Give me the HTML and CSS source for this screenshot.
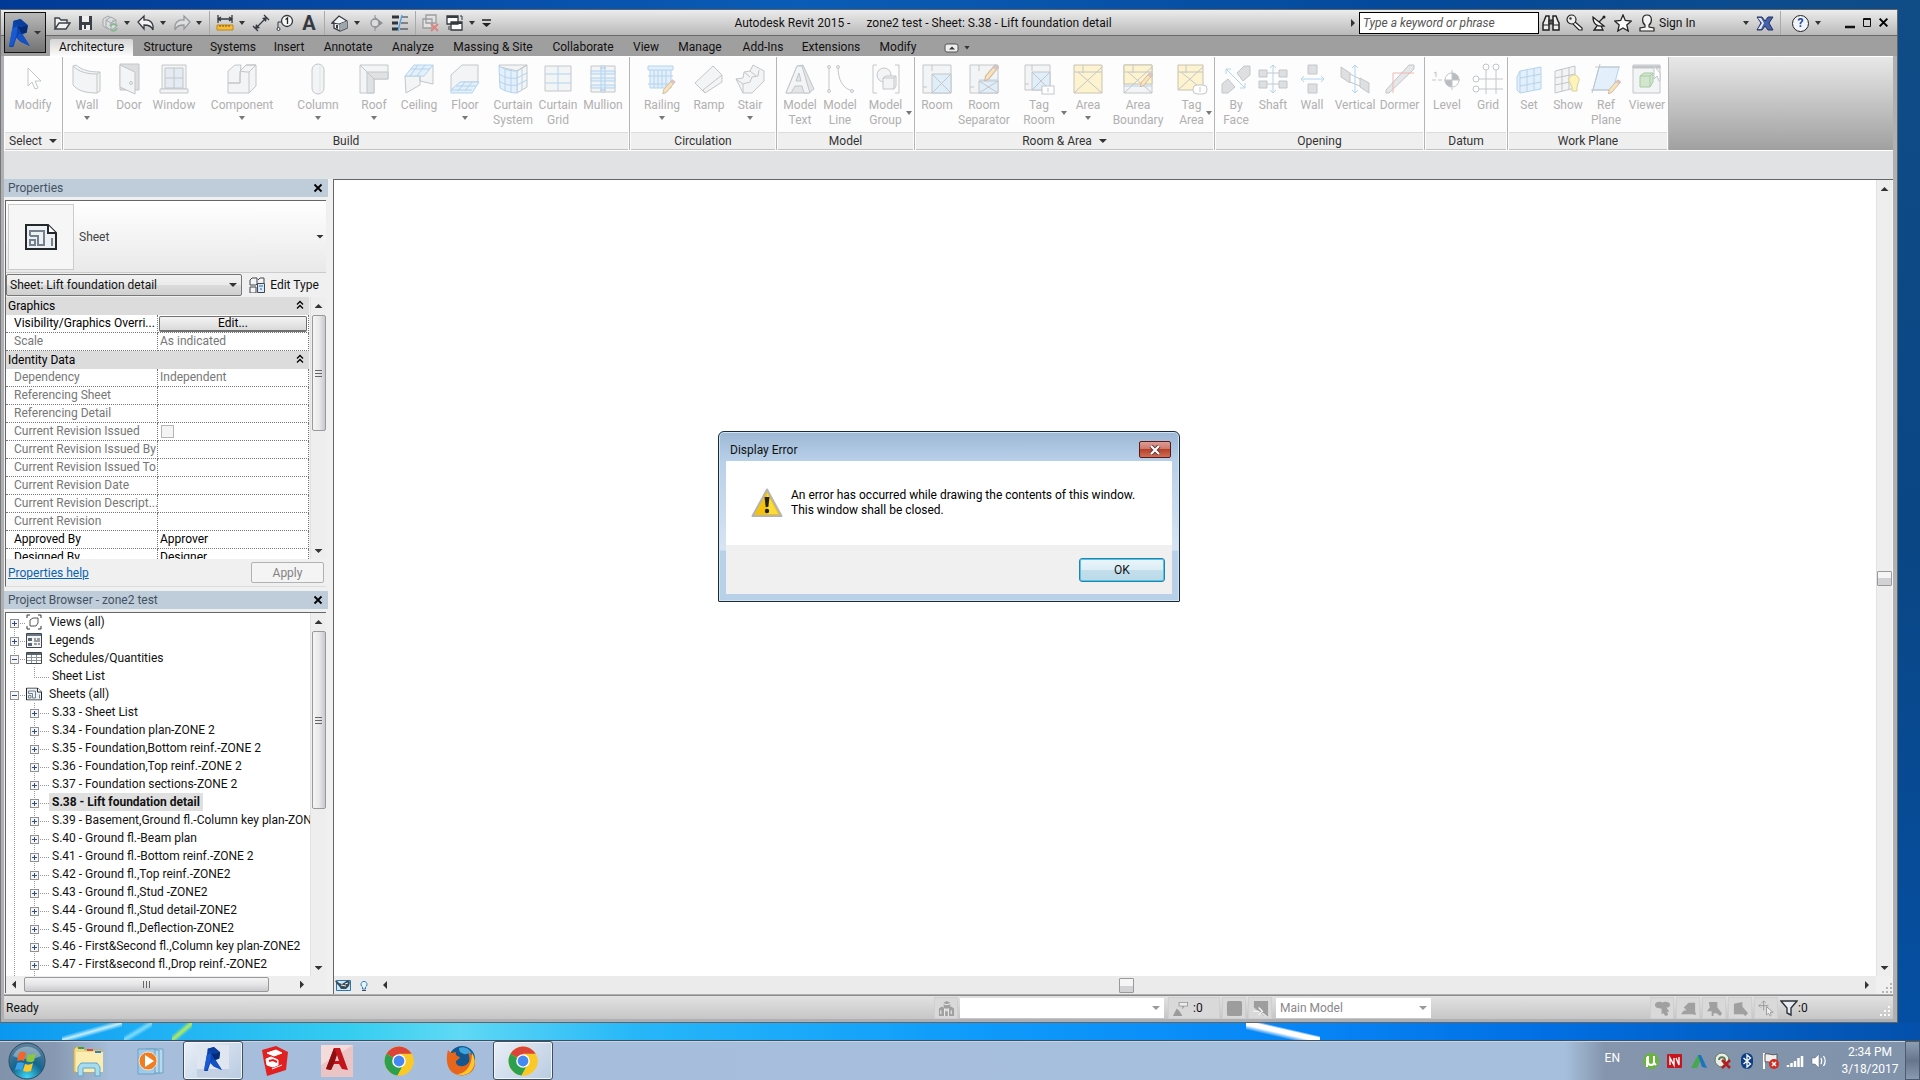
FILE: index.html
```html
<!DOCTYPE html>
<html lang="en">
<head>
    <meta charset="UTF-8">
    <meta name="viewport" content="width=device-width, initial-scale=1.0">
    <title>Autodesk Revit 2015</title>
    <link rel="stylesheet" href="styles.css">
</head>
<body>
    <!-- Shared icons -->
    <svg class="defs" aria-hidden="true">
        <symbol id="plus" viewBox="0 0 9 9"><rect x=".5" y=".5" width="8" height="8" fill="#f6f6f6" stroke="#919191"/><path d="M2 4.500h5M4.500 2v5" stroke="#2f4a86"/></symbol>
        <symbol id="minus" viewBox="0 0 9 9"><rect x=".5" y=".5" width="8" height="8" fill="#f6f6f6" stroke="#919191"/><path d="M2 4.500h5" stroke="#2f4a86"/></symbol>
        <symbol id="x" viewBox="0 0 10 10"><path d="M1.500 1.500l7 7M8.500 1.500l-7 7" stroke="#000" stroke-width="1.800"/></symbol>
        <symbol id="chev" viewBox="0 0 8 10"><path d="M1 4.500l3-3 3 3M1 8.500l3-3 3 3" fill="none" stroke="#000" stroke-width="1.300"/></symbol>
        <symbol id="sheet" viewBox="0 0 32 26"><path d="M1 1h22l8 8v16H1z" fill="#eef1f4" stroke="#23282d" stroke-width="2"/><path d="M23 1v8h8" fill="#fff" stroke="#23282d" stroke-width="2"/><path d="M5 12V7h14v14h-6v-9H5M5 16h5v5H5zM27 14v8" fill="none" stroke="#74818f" stroke-width="2"/></symbol>
        <symbol id="revit" viewBox="0 0 20 27"><path d="M4 2l7-2 7 6-1 7-4 2 7 11-9-4-4-4-3 9H0l3-17z" fill="#0b45ad"/><path d="M4 2l7-2 7 6-6 2z" fill="#0c3f9d"/><path d="M8 7l4 1 6-2-1 7-5 1z" fill="#062a74"/><path d="M3 9l5-2-1 9-4 10-3-1z" fill="#1a5ad0"/><path d="M10 14l3 1 7 11-9-4-4-4z" fill="#1550c4"/></symbol>
        <symbol id="chrome" viewBox="0 0 30 30"><circle cx="15" cy="15" r="14.500" fill="#fbc926"/><path d="M15 15L2.500 7.700A14.500 14.500 0 0 1 27.600 7.700z" fill="#dc4437"/><path d="M2.500 7.700A14.500 14.500 0 0 0 13.500 29.400L19.500 18z" fill="#2da04e"/><path d="M15 7.700h12.600A14.500 14.500 0 0 1 13.500 29.400L20 19z" fill="#fbc926"/><circle cx="15" cy="15" r="6.800" fill="#fff"/><circle cx="15" cy="15" r="5.400" fill="#4688f1"/></symbol>
        <symbol id="pencil" viewBox="0 0 14 16"><path d="M11 1l3 2-9 11-4 2 1-5z" fill="#fae3b8" stroke="#cdb9a2"/><path d="M11 1l3 2-2 2-3-2z" fill="#f2c0b8"/></symbol>
    </svg>

    <div class="app">
        <!-- Title bar and tabs -->
        <header class="frame-top">
            <button class="app-button" aria-label="Application menu"><svg width="21" height="28"><use href="#revit"/></svg><span class="caret"></span></button>
            <div class="titlebar">
                <div class="quick">
                    <button class="qb" aria-label="Open"><svg viewBox="0 0 18 18"><path d="M2 15V4h4l2 2h6v3M2 15l4-6h11l-4 6z" fill="#f2f2f2" stroke="#3c4248" stroke-width="1.400"/></svg></button>
                    <button class="qb" aria-label="Save"><svg viewBox="0 0 18 18"><path d="M2 2h13v14H2z" fill="#3b4148"/><path d="M5 2h7v6H5zM5 11h8v5H5z" fill="#f0f0f0"/><path d="M7 11h2v4H7z" fill="#3b4148"/></svg></button>
                    <button class="qb" aria-label="Synchronize"><svg viewBox="0 0 18 18" fill="#dadcdd" stroke="#a3a7aa"><path d="M2 5l5-3 5 3v7l-5 3-5-3z"/><path d="M5 6l5-3 5 3v7l-5 3-5-3zM5 6l5 3 5-3M10 9v7"/><path d="M9 12a4 4 0 0 1 7 0M16 14a4 4 0 0 1-6 2" stroke="#86b990" fill="none" stroke-width="2"/></svg></button>
                    <span class="caret gap"></span>
                    <button class="qb" aria-label="Undo"><svg viewBox="0 0 18 18"><path d="M1 8l6-6v4c6-1 10 3 9 10-1-3-4-5-9-5v4z" fill="#f4f4f4" stroke="#353a40" stroke-width="1.300"/></svg></button>
                    <span class="caret gap"></span>
                    <button class="qb" aria-label="Redo"><svg viewBox="0 0 18 18"><path d="M17 8l-6-6v4C5 5 1 9 2 16c1-3 4-5 9-5v4z" fill="#dedede" stroke="#96999c" stroke-width="1.300"/></svg></button>
                    <span class="caret gap"></span>
                    <span class="sep"></span>
                    <button class="qb" aria-label="Measure"><svg viewBox="0 0 18 18"><path d="M2 5h14M2 1v8M16 1v8M5 3L2 5l3 2M13 3l3 2-3 2" fill="none" stroke="#353a40" stroke-width="1.300"/><path d="M1 11h16v5H1z" fill="#f5bd3c" stroke="#c08613"/><path d="M4 11v2M7 11v2M10 11v2M13 11v2" stroke="#7e5607"/></svg></button>
                    <span class="caret gap"></span>
                    <button class="qb" aria-label="Aligned dimension"><svg viewBox="0 0 18 18"><path d="M4 14L14 4M1 12l5 5M12 1l5 5" stroke="#353a40" stroke-width="1.300"/><path d="M3 15l1-5 4 4zM15 3l-1 5-4-4z" fill="#353a40"/></svg></button>
                    <button class="qb" aria-label="Tag by category"><svg viewBox="0 0 18 18"><path d="M2 15V8h4" fill="none" stroke="#353a40"/><circle cx="2.500" cy="15" r="1.500" fill="#fff" stroke="#353a40"/><circle cx="11" cy="7" r="5.500" fill="#f8f8f8" stroke="#353a40" stroke-width="1.300"/><path d="M9.500 5.500l2-1.500v6" fill="none" stroke="#222" stroke-width="1.300"/></svg></button>
                    <button class="qb letter" aria-label="Text">A</button>
                    <span class="sep"></span>
                    <button class="qb" aria-label="Default 3D view"><svg viewBox="0 0 18 18"><path d="M1 9l7-7 8 5v7l-7 3-6-3V9z" fill="#f3f4f5" stroke="#353a40" stroke-width="1.300"/><path d="M1 9l7 1 8-3M9 10v7" fill="none" stroke="#353a40"/><path d="M9 10l7-3v7l-7 3z" fill="#9da5ad"/><path d="M5 11h2v4l-2-1z" fill="#353a40"/></svg></button>
                    <span class="caret gap"></span>
                    <button class="qb" aria-label="Section"><svg viewBox="0 0 18 18"><path d="M8 3l8 6-8 6z" fill="#8d9195"/><circle cx="8" cy="9" r="4" fill="#dcdcdc" stroke="#8d9195" stroke-width="1.400"/><path d="M8 1v4M8 13v4" stroke="#8d9195"/></svg></button>
                    <button class="qb" aria-label="Thin lines"><svg viewBox="0 0 18 18"><path d="M1 3h7M1 9h6M1 15h7" stroke="#2f3439" stroke-width="3"/><path d="M11 3h6M10 9h7M9 15h8" stroke="#2f3439"/><path d="M11 1L7 17" stroke="#4aa0e6" stroke-width="1.300"/></svg></button>
                    <span class="sep"></span>
                    <button class="qb" aria-label="Close hidden windows"><svg viewBox="0 0 18 18"><path d="M4 1h10v8H4zM1 5h9v9H1z" fill="#e2e2e2" stroke="#9a9da0" stroke-width="1.300"/><path d="M9 10l7 7M16 10l-7 7" stroke="#dc8580" stroke-width="2"/></svg></button>
                    <button class="qb" aria-label="Switch windows"><svg viewBox="0 0 18 18"><path d="M1 2h11v8H1zM5 8h11v8H5z" fill="#fff" stroke="#353a40" stroke-width="1.300"/><path d="M1 3h11M5 9h11" stroke="#353a40" stroke-width="2"/><path d="M14 2h2v4M3 12v4" stroke="#353a40" fill="none"/></svg></button>
                    <span class="caret gap"></span>
                    <button class="qb small" aria-label="Customize"><svg viewBox="0 0 12 12"><path d="M2 3h9" stroke="#222" stroke-width="1.500"/><path d="M2 6h9l-4.500 4z" fill="#222"/></svg></button>
                </div>
                <div class="doc-title"><span>Autodesk Revit 2015 -</span><span>zone2 test - Sheet: S.38 - Lift foundation detail</span></div>
                <div class="infocenter">
                    <span class="caret right"></span>
                    <input class="search" type="text" placeholder="Type a keyword or phrase" aria-label="Search">
                    <button class="qb" aria-label="Find"><svg viewBox="0 0 18 18"><path d="M2 7l2-5h3v14H1V9zM16 7l-2-5h-3v14h6V9z" fill="#eee" stroke="#222" stroke-width="1.500"/><path d="M7 6h4v4H7zM1 11h6M11 11h6" fill="#555" stroke="#222"/></svg></button>
                    <button class="qb" aria-label="Subscription"><svg viewBox="0 0 18 18"><path d="M8 7l8 7v2h-3l-7-7z" fill="#fff" stroke="#222" stroke-width="1.200"/><circle cx="5.500" cy="5.500" r="4.500" fill="#eee" stroke="#222" stroke-width="1.200"/><circle cx="4.500" cy="4.500" r="1.200" fill="#333"/></svg></button>
                    <button class="qb" aria-label="Exchange"><svg viewBox="0 0 18 18"><path d="M3 3c0 7 4 10 11 9zM9 8l5-5M7 12l-3 4h9l-2-4" fill="#f5f5f5" stroke="#222" stroke-width="1.300"/><circle cx="14" cy="3" r="1.500" fill="#222"/></svg></button>
                    <button class="qb" aria-label="Favorites"><svg viewBox="0 0 18 18"><path d="M9 1l2.300 5.500 6 .5-4.500 4 1.400 6L9 14l-5.200 3 1.400-6L.700 7l6-.5z" fill="#fafafa" stroke="#222" stroke-width="1.300"/></svg></button>
                    <button class="qb" aria-label="Account"><svg viewBox="0 0 18 18"><path d="M9 1c6 0 5 8 2 10v2l5 1v3H2v-3l5-1v-2C4 9 3 1 9 1z" fill="#f4f4f4" stroke="#222" stroke-width="1.200"/></svg></button>
                    <button class="sign-in">Sign In</button>
                    <span class="caret gap"></span>
                    <button class="qb" aria-label="Exchange apps"><svg viewBox="0 0 18 18"><path d="M1 3h5l3 4 3-4h5l-4 6 4 7h-5l-3-4-3 4H1l4-7z" fill="#4462ac" stroke="#26335f"/><path d="M2 4h3l3 5-3 6H2l4-6z" fill="#e4e9f5"/></svg></button>
                    <span class="sep"></span>
                    <button class="help" aria-label="Help">?</button>
                    <span class="caret"></span>
                    <div class="win-buttons">
                        <button aria-label="Minimize"><svg width="12" height="12"><path d="M1 10h10" stroke="#111" stroke-width="2.500"/></svg></button>
                        <button aria-label="Maximize"><svg width="12" height="12"><path d="M2.500 1.500h7v8h-7zM2 2.500h8" fill="none" stroke="#111"/></svg></button>
                        <button aria-label="Close"><svg width="12" height="12"><use href="#x" width="11" height="11"/></svg></button>
                    </div>
                </div>
            </div>
            <nav class="tabs">
                <a class="tab active" href="#">Architecture</a>
                <a class="tab" href="#">Structure</a>
                <a class="tab" href="#">Systems</a>
                <a class="tab" href="#">Insert</a>
                <a class="tab" href="#">Annotate</a>
                <a class="tab" href="#">Analyze</a>
                <a class="tab" href="#">Massing &amp; Site</a>
                <a class="tab" href="#">Collaborate</a>
                <a class="tab" href="#">View</a>
                <a class="tab" href="#">Manage</a>
                <a class="tab" href="#">Add-Ins</a>
                <a class="tab" href="#">Extensions</a>
                <a class="tab" href="#">Modify</a>
                <button class="collapse" aria-label="Minimize ribbon"><svg width="16" height="10"><rect x="1" y="1" width="13" height="8" rx="2" fill="#eee" stroke="#555"/><path d="M5 6.500h6L8 3.500z" fill="#333"/></svg><span class="caret"></span></button>
            </nav>
        </header>

        <!-- Ribbon -->
        <div class="ribbon">
            <section class="panel">
                <div class="tools select">
                    <button class="tool"><svg viewBox="0 0 32 32"><path d="M11 5v18l4-4 3 7 3-1-3-7h6z" fill="#fff"/></svg><span>Modify</span></button>
                </div>
                <h2>Select<span class="caret big"></span></h2>
            </section>
            <section class="panel">
                <div class="tools build">
                    <button class="tool"><svg viewBox="0 0 32 32"><path d="M2 3l3-1c6 5 13 7 24 7v19l-3 2c-11 0-19-2-24-8z"/><path d="M2 3c6 6 14 8 24 8v19M26 11l3-2" class="none"/></svg><span>Wall</span><i class="caret"></i></button>
                    <button class="tool"><svg viewBox="0 0 32 32"><path d="M7 1h19v26H7z" fill="#dcdee0"/><path d="M7 2l15 7v22L7 24z"/><circle cx="18" cy="20" r="1.500"/></svg><span>Door</span></button>
                    <button class="tool"><svg viewBox="0 0 32 32"><path d="M4 2h24v24H4z"/><path d="M7 5h18v20H7zM16 5v20M7 15h18" fill="#e4ebf3"/><path d="M2 26h28v4H2z"/></svg><span>Window</span></button>
                    <button class="tool"><svg viewBox="0 0 32 32"><path d="M2 8l7-6h6l-1 12v6H2zM14 20V8l6-6h10v21l-7 7H2V20z"/><path d="M20 2h10l-7 7v21M14 8l6 1h3" class="none"/></svg><span>Component</span><i class="caret"></i></button>
                    <button class="tool"><svg viewBox="0 0 32 32"><rect x="10" y="1" width="12" height="30" rx="6"/><path d="M18 3v26" stroke="#e1e3e5"/></svg><span>Column</span><i class="caret"></i></button>
                    <button class="tool"><svg viewBox="0 0 32 32"><path d="M2 2h28v14H16v14H2z"/><path d="M9 9h21v7H16v14H9z" fill="#dfe1e3"/><path d="M2 2l14 14"/></svg><span>Roof</span><i class="caret"></i></button>
                    <button class="tool"><svg viewBox="0 0 32 32"><path d="M2 13h15v9L3 30zM17 13l13-11v19l-13-3z"/><path d="M11 2h19l-9 11H2z" class="blue"/><path d="M8 6h19M15 2L7 13M22 2l-8 11" class="blue"/></svg><span>Ceiling</span></button>
                    <button class="tool"><svg viewBox="0 0 32 32"><path d="M2 12L13 2h16v17H14L2 28z"/><path d="M11 19h19l-7 11H2v-3z" class="blue"/><path d="M7 23h20M16 19l-7 9M23 19l-7 9M2 27h21" class="blue"/></svg><span>Floor</span><i class="caret"></i></button>
                    <button class="tool"><svg viewBox="0 0 32 32"><path d="M2 2h28L20 8 3 4zM20 8L30 2v22l-10 6z"/><path d="M2 3c6 4 12 5 18 5v22C14 30 7 28 3 25z" class="blue"/><path d="M8 6v22M14 7v22M2 11c6 4 12 5 18 4l10-5M2 18c6 4 12 5 18 4l10-5M25 5v22" class="blue none"/></svg><span>Curtain<br>System</span></button>
                    <button class="tool"><svg viewBox="0 0 32 32"><path d="M3 3h26v25H3z"/><path d="M16 3v25M3 11h26M3 20h26" class="blue"/></svg><span>Curtain<br>Grid</span></button>
                    <button class="tool"><svg viewBox="0 0 32 32"><path d="M4 3h24v26H4z"/><path d="M4 8h24v3H4zM4 15h24v3H4zM4 22h24v3H4zM14 3h4v26h-4z" class="blue"/><path d="M13 5h6M13 27h6"/></svg><span>Mullion</span></button>
                </div>
                <h2>Build</h2>
            </section>
            <section class="panel">
                <div class="tools circulation">
                    <button class="tool"><svg viewBox="0 0 32 32"><path d="M2 3h25v4H2zM4 7v18h21V7M8 7v18M12 7v18M16 7v18M20 7v18M2 13h25M2 21h25" class="blue"/><use href="#pencil" x="15" y="16" width="15" height="15"/></svg><span>Railing</span><i class="caret"></i></button>
                    <button class="tool"><svg viewBox="0 0 32 32"><path d="M2 20L20 3l9 9v7L12 30z"/><path d="M12 30l-2-3 19-15" class="none"/></svg><span>Ramp</span></button>
                    <button class="tool"><svg viewBox="0 0 32 32"><path d="M2 16l7-1 1-6 6-1 3-6 11 6v10L18 30H9z"/><path d="M2 16l7 5v9M9 21l7-2 2-5 6-1 1-6M10 9l6 5M16 8l6 5" class="none"/></svg><span>Stair</span><i class="caret"></i></button>
                </div>
                <h2>Circulation</h2>
            </section>
            <section class="panel">
                <div class="tools model">
                    <button class="tool"><svg viewBox="0 0 32 32"><path d="M13 3l6-1 11 24-5 4H2L13 3z" fill="#e3e5e7"/><path d="M13 3h5l8 27h-6l-2-7h-7l-4 7H2zM12 18h5l-2-8z"/></svg><span>Model<br>Text</span></button>
                    <button class="tool"><svg viewBox="0 0 32 32"><path d="M5 4v24M14 4c0 13 5 22 15 24" class="none"/><circle cx="5" cy="4" r="1.500"/><circle cx="5" cy="28" r="1.500"/><circle cx="14" cy="4" r="1.500"/><circle cx="28" cy="28" r="1.500"/></svg><span>Model<br>Line</span></button>
                    <button class="tool"><svg viewBox="0 0 32 32"><path d="M7 2H3v28h4M25 2h4v28h-4" class="none"/><circle cx="14" cy="12" r="7"/><path d="M13 15l3-2h10v10l-2 3H13zM13 15h11v11M24 15l2-2"/></svg><span>Model<br>Group</span><i class="caret side"></i></button>
                </div>
                <h2>Model</h2>
            </section>
            <section class="panel">
                <div class="tools room">
                    <button class="tool"><svg viewBox="0 0 32 32"><path d="M2 2h28v28H2z"/><path d="M11 11h19v19H11z" fill="#e0eef9"/><path d="M11 11l19 19M30 11L11 30M11 2v6M2 24h4"/></svg><span>Room</span></button>
                    <button class="tool"><svg viewBox="0 0 32 32"><path d="M2 2h28v28H2z"/><path d="M11 18h19v12H11z" fill="#e0eef9"/><path d="M11 18l19 12M30 18L11 30M11 2v6M2 24h4"/><path d="M11 17h19" class="blue"/><use href="#pencil" x="15" y="1" width="16" height="17"/></svg><span>Room<br>Separator</span></button>
                    <button class="tool"><svg viewBox="0 0 32 32"><path d="M2 2h25v25H2z"/><path d="M9 9h18v18H9z" fill="#e0eef9"/><path d="M9 9l18 18M27 9L9 27M9 2v6M2 21h4"/><rect x="19" y="23" width="12" height="8" fill="#fff"/><path d="M25 25v4"/></svg><span>Tag<br>Room</span><i class="caret side"></i></button>
                    <button class="tool"><svg viewBox="0 0 32 32"><path d="M2 2h28v28H2z" class="yellow"/><path d="M2 9h28M11 2v8M2 30L30 4M6 9l24 21" class="none"/></svg><span>Area</span><i class="caret"></i></button>
                    <button class="tool"><svg viewBox="0 0 32 32"><path d="M2 2h28v28H2z"/><path d="M2 2h28v19H2z" class="yellow"/><path d="M2 9h28M11 2v8M2 30L30 4M6 9l24 21" class="none"/><path d="M2 23h28" class="blue"/><use href="#pencil" x="17" y="9" width="14" height="15"/></svg><span>Area<br>Boundary</span></button>
                    <button class="tool"><svg viewBox="0 0 32 32"><path d="M2 2h25v25H2z" class="yellow"/><path d="M2 9h25M10 2v8M2 27L27 4M5 9l22 18" class="none"/><rect x="17" y="22" width="14" height="9" rx="4" fill="#fff"/><path d="M24 24v5"/></svg><span>Tag<br>Area</span><i class="caret side"></i></button>
                </div>
                <h2>Room &amp; Area<span class="caret big"></span></h2>
            </section>
            <section class="panel">
                <div class="tools opening">
                    <button class="tool"><svg viewBox="0 0 32 32"><path d="M17 10l7-7h6v9l-7 6zM2 21l6-5 7 8-7 6H2z" fill="#dedfe1"/><path d="M6 6l19 19M6 11V6h5M20 25h5v-5" class="blue none"/></svg><span>By<br>Face</span></button>
                    <button class="tool"><svg viewBox="0 0 32 32"><path d="M2 7h8v7H2zM22 7h8v7h-8zM2 18h8v7H2zM22 18h8v7h-8zM10 10h12M10 21h12" fill="#dedfe1"/><path d="M16 2v28M13 5l3-3 3 3M13 27l3 3 3-3" class="blue none"/></svg><span>Shaft</span></button>
                    <button class="tool"><svg viewBox="0 0 32 32"><path d="M12 2h9v9h-9zM12 21h9v9h-9z" fill="#dedfe1"/><path d="M5 16h23M8 13l-3 3 3 3M25 13l3 3-3 3" class="blue none"/></svg><span>Wall</span></button>
                    <button class="tool"><svg viewBox="0 0 32 32"><path d="M2 4l9 6v10l-9-6zM21 15l9 5v10l-9-6zM11 11l10 5M11 19l10 4" fill="#dedfe1"/><path d="M16 2v28M13 5l3-3 3 3M13 27l3 3 3-3" class="blue none"/></svg><span>Vertical</span></button>
                    <button class="tool"><svg viewBox="0 0 32 32"><path d="M2 27L25 2h5v4L5 30H2z" fill="#e6e7e8"/><path d="M9 30V10h21" class="red"/></svg><span>Dormer</span></button>
                </div>
                <h2>Opening</h2>
            </section>
            <section class="panel">
                <div class="tools datum">
                    <button class="tool"><svg viewBox="0 0 32 32"><path d="M1 17h29M21 7v20" stroke-dasharray="4 2"/><circle cx="21" cy="17" r="7" fill="#fff"/><path d="M21 17v-7a7 7 0 0 1 7 7zM21 17v7a7 7 0 0 1-7-7z" fill="#b9bcbf"/><path d="M5 14V9l-2 1"/></svg><span>Level</span></button>
                    <button class="tool"><svg viewBox="0 0 32 32"><path d="M14 7v24M24 7v24M7 16h24M7 26h24"/><circle cx="14" cy="4" r="3" fill="#fff"/><circle cx="24" cy="4" r="3" fill="#fff"/><circle cx="4" cy="16" r="3" fill="#fff"/><circle cx="4" cy="26" r="3" fill="#fff"/></svg><span>Grid</span></button>
                </div>
                <h2>Datum</h2>
            </section>
            <section class="panel">
                <div class="tools plane">
                    <button class="tool"><svg viewBox="0 0 32 32"><path d="M7 8l21-4v22L7 30zM7 8l-3 6v13l3 3M14 7v22M21 5v22M7 15l21-4M7 23l21-4" class="blue"/></svg><span>Set</span></button>
                    <button class="tool"><svg viewBox="0 0 32 32"><path d="M3 8l20-5v22L3 30zM10 6v22M17 5v22M3 15l20-4M3 22l20-4"/><path d="M18 20a5 5 0 1 1 8 0l-1 4v4h-5v-4z" fill="#fff3b8" stroke="#d8cfa0"/></svg><span>Show</span></button>
                    <button class="tool"><svg viewBox="0 0 32 32"><path d="M9 4h20l-6 23H3z" class="blue"/><path d="M5 4h25M1 27h20M10 1L2 30"/><use href="#pencil" x="17" y="16" width="14" height="15"/></svg><span>Ref<br>Plane</span></button>
                    <button class="tool"><svg viewBox="0 0 32 32"><path d="M2 2h27v28H2z"/><path d="M2 3h27v2H2z" fill="#c2c4c7"/><path d="M9 13l4-3h9v9l-3 5H9zM9 13h10v11M19 13l3-3" fill="#d2e6ce" stroke="#a9c9a5"/><path d="M23 3v13l3-3 2 5h1v-8z" fill="#fff"/></svg><span>Viewer</span></button>
                </div>
                <h2>Work Plane</h2>
            </section>
        </div>
        <div class="options-bar"></div>

        <main class="workspace">
            <aside class="palettes">
                <!-- Properties -->
                <div class="palette-head"><span>Properties</span><button aria-label="Close properties"><svg width="10" height="10"><use href="#x"/></svg></button></div>
                <div class="properties">
                    <div class="type-selector">
                        <div class="thumb"><svg width="32" height="26"><use href="#sheet"/></svg></div>
                        <span>Sheet</span>
                        <button aria-label="Choose type"><span class="caret big"></span></button>
                    </div>
                    <div class="type-row">
                        <label class="combo"><select aria-label="Instance"><option>Sheet: Lift foundation detail</option></select><span class="caret big"></span></label>
                        <button class="edit-type"><svg width="16" height="16"><path d="M1 3l2-2h5v6l-1 1H1zM9 3l2-2h4v5M1 10h6v6H1z" fill="#f5f5f5" stroke="#41474d"/><path d="M8.500 6.500h7v9h-7z" fill="#dce9f6" stroke="#41474d"/><path d="M10 9h4M11 12h2" stroke="#2568ad"/></svg>Edit Type</button>
                    </div>
                    <div class="scroll-pane props-pane">
                        <table class="props">
                            <colgroup><col class="name-col"><col></colgroup>
                            <tbody>
                                <tr class="group"><th colspan="2"><span>Graphics</span><svg width="8" height="10"><use href="#chev"/></svg></th></tr>
                                <tr class="on"><th>Visibility/Graphics Overri...</th><td class="flush"><button class="edit">Edit...</button></td></tr>
                                <tr><th>Scale</th><td>As indicated</td></tr>
                                <tr class="group"><th colspan="2"><span>Identity Data</span><svg width="8" height="10"><use href="#chev"/></svg></th></tr>
                                <tr><th>Dependency</th><td>Independent</td></tr>
                                <tr><th>Referencing Sheet</th><td></td></tr>
                                <tr><th>Referencing Detail</th><td></td></tr>
                                <tr><th><label for="issued">Current Revision Issued</label></th><td><input type="checkbox" id="issued" disabled></td></tr>
                                <tr><th>Current Revision Issued By</th><td></td></tr>
                                <tr><th>Current Revision Issued To</th><td></td></tr>
                                <tr><th>Current Revision Date</th><td></td></tr>
                                <tr><th>Current Revision Descript...</th><td></td></tr>
                                <tr><th>Current Revision</th><td></td></tr>
                                <tr class="on"><th>Approved By</th><td>Approver</td></tr>
                                <tr class="on"><th>Designed By</th><td>Designer</td></tr>
                            </tbody>
                        </table>
                        <div class="vbar"><span class="caret up"></span><div class="vthumb props-thumb"></div><span class="caret dark"></span></div>
                    </div>
                    <div class="props-foot"><a href="#">Properties help</a><button disabled>Apply</button></div>
                </div>

                <!-- Project browser -->
                <div class="palette-head"><span>Project Browser - zone2 test</span><button aria-label="Close browser"><svg width="10" height="10"><use href="#x"/></svg></button></div>
                <div class="browser">
                    <div class="scroll-pane tree-pane">
                        <ul class="tree">
                            <li class="root first"><svg class="box"><use href="#plus"/></svg><svg class="kind" viewBox="0 0 16 16"><path d="M1 4V1h3M12 1h3v3M15 12v3h-3M4 15H1v-3" fill="none" stroke="#333"/><path d="M4 6l3-2h5v5l-2 3H4z" fill="#fff" stroke="#555"/></svg><span>Views (all)</span></li>
                            <li class="root"><svg class="box"><use href="#plus"/></svg><svg class="kind" viewBox="0 0 16 16"><path d="M.500 1.500h15v14H.500z" fill="#f4f4f4" stroke="#41474d"/><path d="M1 3h14" stroke="#6a7785" stroke-width="2"/><path d="M2 6h4v3H2zM2 11h4v3H2z" fill="#5c6670"/><path d="M8 7h2M11 7h3M8 9h6M8 12h3M12 12h2" stroke="#41474d"/></svg><span>Legends</span></li>
                            <li class="root"><svg class="box"><use href="#minus"/></svg><svg class="kind" viewBox="0 0 16 16"><path d="M.500 2.500h15v11H.500z" fill="#fff" stroke="#41474d"/><path d="M1 4h14" stroke="#5c6670" stroke-width="2"/><path d="M1 7.500h14M1 10.500h14M5.500 5v8M10.500 5v8" stroke="#8c949c"/></svg><span>Schedules/Quantities</span></li>
                            <li class="leaf last"><span>Sheet List</span></li>
                            <li class="root"><svg class="box"><use href="#minus"/></svg><svg class="kind" viewBox="0 0 32 26"><use href="#sheet"/></svg><span>Sheets (all)</span></li>
                            <li class="leaf"><svg class="box"><use href="#plus"/></svg><span>S.33 - Sheet List</span></li>
                            <li class="leaf"><svg class="box"><use href="#plus"/></svg><span>S.34 - Foundation plan-ZONE 2</span></li>
                            <li class="leaf"><svg class="box"><use href="#plus"/></svg><span>S.35 - Foundation,Bottom reinf.-ZONE 2</span></li>
                            <li class="leaf"><svg class="box"><use href="#plus"/></svg><span>S.36 - Foundation,Top reinf.-ZONE 2</span></li>
                            <li class="leaf"><svg class="box"><use href="#plus"/></svg><span>S.37 - Foundation sections-ZONE 2</span></li>
                            <li class="leaf current"><svg class="box"><use href="#plus"/></svg><span>S.38 - Lift foundation detail</span></li>
                            <li class="leaf"><svg class="box"><use href="#plus"/></svg><span>S.39 - Basement,Ground fl.-Column key plan-ZONE2</span></li>
                            <li class="leaf"><svg class="box"><use href="#plus"/></svg><span>S.40 - Ground fl.-Beam plan</span></li>
                            <li class="leaf"><svg class="box"><use href="#plus"/></svg><span>S.41 - Ground fl.-Bottom reinf.-ZONE 2</span></li>
                            <li class="leaf"><svg class="box"><use href="#plus"/></svg><span>S.42 - Ground fl.,Top reinf.-ZONE2</span></li>
                            <li class="leaf"><svg class="box"><use href="#plus"/></svg><span>S.43 - Ground fl.,Stud -ZONE2</span></li>
                            <li class="leaf"><svg class="box"><use href="#plus"/></svg><span>S.44 - Ground fl.,Stud detail-ZONE2</span></li>
                            <li class="leaf"><svg class="box"><use href="#plus"/></svg><span>S.45 - Ground fl.,Deflection-ZONE2</span></li>
                            <li class="leaf"><svg class="box"><use href="#plus"/></svg><span>S.46 - First&amp;Second fl.,Column key plan-ZONE2</span></li>
                            <li class="leaf"><svg class="box"><use href="#plus"/></svg><span>S.47 - First&amp;second fl.,Drop reinf.-ZONE2</span></li>
                            <li class="leaf"><svg class="box"><use href="#plus"/></svg><span>S.48 - First&amp;second fl.,Beam fl.,Zone 2</span></li>
                        </ul>
                        <div class="vbar"><span class="caret up"></span><div class="vthumb tree-thumb"></div><span class="caret dark"></span></div>
                    </div>
                    <div class="hbar"><span class="caret left"></span><div class="hthumb"></div><span class="caret right"></span></div>
                </div>
            </aside>

            <!-- Drawing area -->
            <section class="view">
                <div class="canvas"></div>
                <div class="vbar view-vbar"><span class="caret up"></span><div class="knob"></div><span class="caret dark"></span></div>
                <div class="view-controls">
                    <button aria-label="Hide crop"><svg width="16" height="14"><path d="M1.500 2.500h14v10h-14z" fill="#cfe8f5" stroke="#2d74ae"/><path d="M0 3c2-1 3 1 4 2l3 1 3-2 3-2 2 2-1 4-3 3H6L4 8 2 6z" fill="#3b4c59"/><path d="M6 7l5 1M10 6l3-1" stroke="#e8f2f8"/></svg></button>
                    <button aria-label="Reveal hidden"><svg width="12" height="14"><path d="M4.500 9a3 3 0 1 1 3 0v2h-3z" fill="#e6f4fc" stroke="#2d7cc2"/><path d="M4 12.500h4" stroke="#445"/></svg></button>
                    <span class="caret left"></span>
                    <div class="track"><div class="knob"></div></div>
                    <span class="caret right"></span>
                </div>
                <div class="corner"><svg width="12" height="12" class="grip"><path d="M9 2h2M5 6h2M9 6h2M1 10h2M5 10h2M9 10h2" stroke="#b5b5b5" stroke-width="2"/></svg></div>
            </section>
        </main>

        <!-- Status bar -->
        <footer class="status">
            <span class="ready">Ready</span>
            <button class="sb" aria-label="Worksets"><svg viewBox="0 0 18 18"><path d="M1 9l3-2 3 2v8H1zM11 9l3-2 3 2v8h-6zM6 3l3-2 4 2v6H6zM7 12h4v5H7z" fill="#a0a0a0"/><path d="M7 9v8M11 9v8M6 4l3 1 4-1M3 11v4M14 11v4" fill="none" stroke="#f6f6f6"/></svg></button>
            <label class="status-combo workset"><select aria-label="Active workset" disabled><option></option></select><span class="caret big"></span></label>
            <button class="sb count"><svg viewBox="0 0 18 18"><path d="M7 2h10v5h-4l-2 3V7H7zM5 9l3 3 3 5H1z" fill="#9b9b9b"/><path d="M8 3h8v3H8z" fill="#ececec"/></svg>:0</button>
            <button class="sb" aria-label="Design options"><svg viewBox="0 0 18 18"><rect x="1" y="1" width="16" height="16" rx="2" fill="#9d9d9d"/></svg></button>
            <button class="sb" aria-label="Pick to edit"><svg viewBox="0 0 18 18"><path d="M2 1h15v16h-4L2 8z" fill="#9d9d9d"/><path d="M1 12h7M7 8l4 4-4 4M11 14l4 3" stroke="#f3f3f3" fill="none" stroke-width="1.500"/></svg></button>
            <label class="status-combo option"><select aria-label="Design option" disabled><option>Main Model</option></select><span class="caret big"></span></label>
            <div class="select-tools">
                <button class="sb" aria-label="Select links"><svg viewBox="0 0 18 18"><path d="M1 5c0-3 6-4 8-2 2-2 8-1 8 2 0 2-2 3-4 3l3 4-2 1 1 3-3 1-2-3-2 1V9C4 9 1 8 1 5z" fill="#a0a0a0"/></svg></button>
                <button class="sb" aria-label="Select underlay"><svg viewBox="0 0 18 18"><path d="M9 3h7v9l1 4-4-1H1l3-4h3L4 8z" fill="#a0a0a0"/></svg></button>
                <button class="sb" aria-label="Select pinned"><svg viewBox="0 0 18 18"><path d="M3 2h9v6l5 6-2 3-4-3H8v3H6v-5H1l3-4z" fill="#a0a0a0"/></svg></button>
                <button class="sb" aria-label="Select by face"><svg viewBox="0 0 18 18"><path d="M2 4l9-2v5l6 7-3 3-2-2H2z" fill="#a0a0a0"/></svg></button>
                <button class="sb" aria-label="Drag elements"><svg viewBox="0 0 18 18"><path d="M6 1v10M1 6h10M4 3l2-2 2 2M3 4L1 6l2 2M9 7v9l2-2 2 3 1-1-1-3h3z" fill="#eee" stroke="#999"/></svg></button>
            </div>
            <button class="filter"><svg width="18" height="18"><path d="M1 2h16l-6 7v7l-4-2V9z" fill="#e8ecf2" stroke="#2d333a" stroke-width="1.400"/></svg>:0</button>
            <svg width="12" height="12" class="grip"><path d="M9 2h2M5 6h2M9 6h2M1 10h2M5 10h2M9 10h2" stroke="#fafafa" stroke-width="2"/></svg>
        </footer>
    </div>

    <!-- Error dialog -->
    <div class="dialog" role="alertdialog" aria-labelledby="dlg-title">
        <div class="dialog-head"><span id="dlg-title">Display Error</span><button aria-label="Close dialog"><svg width="14" height="10"><path d="M3 1l8 8M11 1L3 9" stroke="#5a3436" stroke-width="4"/><path d="M3 1l8 8M11 1L3 9" stroke="#fff" stroke-width="2.200"/></svg></button></div>
        <div class="dialog-body">
            <svg width="32" height="30"><path d="M16 1.500L30.500 28h-29z" fill="#f4c20d" stroke="#b4b4b4" stroke-width="2" stroke-linejoin="round"/><path d="M16 5l11 21H16z" fill="#fcdc3a"/><path d="M13.500 9h5l-1.200 10h-2.600z" fill="#222"/><circle cx="16" cy="23" r="2.200" fill="#222"/></svg>
            <p>An error has occurred while drawing the contents of this window.<br>This window shall be closed.</p>
        </div>
        <div class="dialog-foot"><button>OK</button></div>
    </div>

    <!-- Taskbar -->
    <div class="taskbar">
        <button class="start" aria-label="Start"><svg width="38" height="38" viewBox="0 0 38 38"><defs><radialGradient id="orb" cx=".5" cy=".95" r=".9"><stop offset="0" stop-color="#3fd6f5"/><stop offset=".5" stop-color="#13668f"/><stop offset="1" stop-color="#5b7f9d"/></radialGradient></defs><circle cx="19" cy="19" r="18" fill="url(#orb)" stroke="#2e4b66"/><path d="M5 14a15 15 0 0 1 28 0c-8 4-20 4-28 0z" fill="#fff" opacity=".35"/><path d="M11 11c3-2 5-1 7 0l-2 8c-2-1-4-1-7 0z" fill="#f0662b"/><path d="M20 12c3 1 5 1 8-1l-2 8c-3 2-5 1-8 0z" fill="#8cc63f"/><path d="M9 21c2-1 4-1 7 0l-2 7c-2-1-4-1-7 0z" fill="#3aa0e8"/><path d="M17 22c3 1 5 1 8-1l-2 8c-3 1-5 1-8 0z" fill="#fcc92c"/></svg></button>
        <button class="task" aria-label="Explorer"><svg width="34" height="34" viewBox="0 0 34 34"><path d="M2 5l2-2h7l2 3h17v22H2z" fill="#f0d98a" stroke="#c9a94f"/><path d="M4 8h27v20H4z" fill="#fbedb1"/><path d="M6 4h6" stroke="#3b9c5a" stroke-width="2"/><path d="M15 6h6" stroke="#d0503b" stroke-width="2"/><path d="M23 8h6" stroke="#2f7fd0" stroke-width="2"/><path d="M6 32V23l3-4h16l3 4v9h-5v-8H11v8z" fill="#a7dbf0" stroke="#5ea6c8"/></svg></button>
        <button class="task" aria-label="Media Player"><svg width="34" height="34" viewBox="0 0 34 34"><path d="M12 5h17v24H12z" fill="#b5d9ef" stroke="#6a9fc4"/><path d="M8 6h17v23H8z" fill="#b5d9ef" stroke="#6a9fc4"/><path d="M4 5h17v25H4z" fill="#9fcbe8" stroke="#6a9fc4"/><circle cx="14" cy="17" r="9" fill="#ef7d22" stroke="#fbe0c5"/><path d="M11 11l9 6-9 6z" fill="#fff"/></svg></button>
        <button class="task open" aria-label="Revit"><svg width="32" height="32" viewBox="0 0 32 32"><path d="M0 0h32v32H0z" fill="#dfe6f0"/><path d="M0 24h32v8H0z" fill="#c3cfe2"/><use href="#revit" x="7" y="2" width="18" height="24"/></svg></button>
        <button class="task" aria-label="SketchUp"><svg width="32" height="32" viewBox="0 0 32 32"><path d="M3 5l14-4 12 6-2 18-19 6-3-14z" fill="#e1201f"/><path d="M8 8l9-3 6 3-8 3zM7 14l5-2 7 3v5l-5 2-6-2zM13 24l10-4" fill="#fff" stroke="#fff"/><path d="M10 16l4-1 4 2" stroke="#e1201f" fill="none" stroke-width="2"/></svg></button>
        <button class="task" aria-label="AutoCAD"><svg width="32" height="32" viewBox="0 0 32 32"><path d="M0 0h32v32H0z" fill="#ebc5c6"/><path d="M0 0h32L0 20z" fill="#f4dcdc"/><path d="M13 3h6l8 22-6-1-3-5h-5l-3 6-5-1z" fill="#c3151b"/><path d="M13 3l3 8-6 14-5-1z" fill="#8e0e12"/><path d="M14 16l2-6 2 6z" fill="#ebc5c6"/></svg></button>
        <button class="task" aria-label="Chrome"><svg width="30" height="30"><use href="#chrome"/></svg></button>
        <button class="task" aria-label="Firefox"><svg width="32" height="32" viewBox="0 0 32 32"><circle cx="17" cy="14" r="13" fill="#12578f"/><path d="M14 3c5-2 11 1 13 6-4-2-5 1-8 0s-5-2-5-6z" fill="#3ea6dc"/><path d="M3 5l3 3 5-1c-1 3 1 4 4 5-1 3-5 3-4 6 2 5 10 4 13-1 1-3 0-7-1-10 9 5 9 16 2 21-8 5-19 2-22-7-2-6-1-12 0-16z" fill="#e8651c"/><path d="M27 8c4 6 4 14-3 20-4 2-8 3-12 1 8 0 15-7 15-21z" fill="#fcc72b"/></svg></button>
        <button class="task open" aria-label="Chrome window"><svg width="30" height="30"><use href="#chrome"/></svg></button>
        <div class="tray">
            <span class="lang">EN</span>
            <svg viewBox="0 0 18 18"><circle cx="9" cy="9" r="8" fill="#6cb33e"/><path d="M6 4v6c0 4 6 4 6 0V4M5 15V5M12 11l2 2" fill="none" stroke="#fff" stroke-width="2"/></svg>
            <svg viewBox="0 0 18 18"><rect x="1" y="2" width="15" height="14" rx="1" fill="#c4161c"/><path d="M4 13V6l4 7V6M10 6l3 7V5" fill="none" stroke="#fff" stroke-width="1.400"/></svg>
            <svg viewBox="0 0 18 18"><path d="M1 16l7-13 3 4-4 9z" fill="#45a84a"/><path d="M8 3h3l6 13-5-1z" fill="#1b75bc"/></svg>
            <svg viewBox="0 0 18 18"><circle cx="8" cy="8" r="7" fill="#e8efe6" stroke="#64795f"/><path d="M5 8a3 3 0 1 1 4 3" fill="none" stroke="#5f7a57" stroke-width="2"/><path d="M8 8l8 8M16 8l-8 8" stroke="#b71c1c" stroke-width="2.500"/></svg>
            <svg viewBox="0 0 18 18"><rect x="3" y="1" width="12" height="16" rx="6" fill="#0d3f84"/><path d="M5.500 6l7 6L9 15V3l3.500 3-7 6" fill="none" stroke="#fff" stroke-width="1.300"/></svg>
            <svg viewBox="0 0 18 18"><path d="M2 1v16" stroke="#fff" stroke-width="2"/><path d="M3 2c4-1 7 2 12 0v8c-5 2-8-1-12 0z" fill="#eee" stroke="#555"/><circle cx="12" cy="12" r="5" fill="#d42b1e"/><path d="M10 10l4 4M14 10l-4 4" stroke="#fff" stroke-width="1.500"/></svg>
            <svg viewBox="0 0 18 18"><path d="M2 15v-2M5.500 15v-4M9 15V9M12.500 15V6M16 15V4" stroke="#fff" stroke-width="2.500"/></svg>
            <svg viewBox="0 0 18 18"><path d="M2 6h3l4-4v14l-4-4H2z" fill="#fff" stroke="#5a6577" stroke-width=".5"/><path d="M11 6c1 2 1 4 0 6M13.500 4c2 3 2 7 0 10" fill="none" stroke="#fff" stroke-width="1.300"/></svg>
            <div class="clock"><span>2:34 PM</span><span>3/18/2017</span></div>
            <button class="show-desktop" aria-label="Show desktop"></button>
        </div>
    </div>
</body>
</html>
```

FILE: styles.css
```css
/* Reset and base styles */
* {
    margin: 0;
    padding: 0;
    box-sizing: border-box;
}

body {
    display: flex;
    flex-direction: column;
    height: 100vh;
    overflow: hidden;
    padding-top: 9px;
    font: 12px/18px Roboto, "Open Sans", sans-serif;
    color: #111;
    /* wallpaper: light streaks and bright strip at the bottom, dark blue above */
    background:
        linear-gradient(to top right, transparent 30%, #fff 44%, #fff 56%, transparent 62%) 1246px calc(100% - 40px) / 74px 17px no-repeat,
        linear-gradient(to bottom right, transparent 38%, #c3effb 50%, transparent 62%) 62px calc(100% - 40px) / 60px 17px no-repeat,
        linear-gradient(to bottom right, transparent 36%, #7fdcf8 50%, transparent 64%) 124px calc(100% - 40px) / 28px 17px no-repeat,
        linear-gradient(to bottom right, transparent 34%, #b4ec5c 50%, transparent 66%) 172px calc(100% - 40px) / 20px 17px no-repeat,
        linear-gradient(90deg, #0a97f0 0, #1fb0f5 8%, #34cdf0 18%, #5fd9f5 24%, #27b7f8 33%, #0f9cfb 50%, #0785f6 68%, #0170e4 80%, #0450ab 100%) 0 100% / 100% 57px no-repeat,
        linear-gradient(90deg, #003a96 0, #0a5cb6 42%, #04499a 75%, #0f4c88 100%) 0 0 / 1898px 9px no-repeat,
        linear-gradient(180deg, #104c86 0, #0a4684 50%, #0450a6 100%);
}

button,
input,
select {
    font: inherit;
    color: inherit;
    background: none;
    border: none;
}

button {
    display: flex;
    align-items: center;
    justify-content: center;
}

svg {
    display: block;
    flex-shrink: 0;
}

.defs {
    position: absolute;
    width: 0;
    height: 0;
}

/* Small arrows */
.caret {
    display: block;
    flex-shrink: 0;
    width: 10px;
    height: 4px;
    background: #333;
    background-clip: content-box;
    padding: 0 2px;
    clip-path: polygon(20% 0, 80% 0, 50% 100%);
}

.caret.gap {
    margin-right: 2px;
}

.caret.big,
.caret.dark {
    padding: 0;
    width: 8px;
    clip-path: polygon(0 0, 100% 0, 50% 100%);
}

.caret.up {
    padding: 0;
    width: 8px;
    clip-path: polygon(0 100%, 100% 100%, 50% 0);
}

.caret.left,
.caret.right {
    padding: 0;
    width: 4px;
    height: 8px;
    clip-path: polygon(0 0, 100% 50%, 0 100%);
}

.caret.left {
    clip-path: polygon(100% 0, 0 50%, 100% 100%);
}

/* Application window */
.app {
    flex: 1;
    min-height: 0;
    display: flex;
    flex-direction: column;
    margin: 0 22px 17px 0;
    border: 1px solid #606468;
    border-left-color: #777;
    background: #aeb0b4;
}

.frame-top {
    display: grid;
    grid-template-columns: 45px 1fr;
    grid-template-rows: 26px 20px;
    background: linear-gradient(#ececec 0, #b9b9b9 25px, #686868 25px, #686868 26px, #9f9f9f 26px);
}

.app-button {
    grid-row: 1 / 3;
    margin: 2px 0 3px 3px;
    gap: 4px;
    border: 1px solid #111;
    background: linear-gradient(#b9b9b9, #737373);
}

.app-button .caret {
    padding: 0;
    width: 8px;
    clip-path: polygon(0 0, 100% 0, 50% 100%);
}

.titlebar {
    display: grid;
    grid-template-columns: 449px 1fr 546px;
    align-items: center;
    height: 26px;
}

.quick,
.infocenter {
    display: flex;
    align-items: center;
}

.quick {
    padding-left: 4px;
}

.qb {
    width: 24px;
    height: 22px;
    flex-shrink: 0;
}

.qb svg {
    width: 18px;
    height: 18px;
}

.qb.small {
    width: 14px;
}

.qb.small svg {
    width: 12px;
    height: 12px;
}

.letter {
    font-size: 20px;
    font-weight: bold;
    color: #353a40;
}

.sep {
    width: 1px;
    height: 24px;
    margin: 0 3px;
    background: #a9a9a9;
}

.doc-title {
    display: flex;
    justify-content: center;
    gap: 16px;
    white-space: nowrap;
}

.search {
    width: 180px;
    height: 22px;
    margin-left: 4px;
    padding: 0 3px;
    border: 1px solid #000;
    background: #fff;
}

.search::placeholder {
    font-style: italic;
    color: #555;
    opacity: 1;
}

.sign-in {
    width: 82px;
    justify-content: flex-start;
}

.help {
    width: 17px;
    height: 17px;
    margin: 0 4px 0 8px;
    border: 1px solid #222;
    border-radius: 50%;
    background: #f0f4fb;
    color: #224a9c;
    font-weight: bold;
}

.win-buttons {
    display: flex;
    margin: 0 5px 0 auto;
}

.win-buttons button {
    width: 17px;
}

/* Tabs */
.tabs {
    display: grid;
    grid-template-columns: 83px 70px 60px 52px 66px 64px 96px 84px 42px 66px 60px 76px 58px 45px;
    align-items: end;
    justify-content: start;
    padding-left: 4px;
}

.tab {
    height: 17px;
    line-height: 17px;
    text-align: center;
    color: #111;
    text-decoration: none;
    white-space: nowrap;
}

.tab.active {
    border-radius: 2px 2px 0 0;
    background: linear-gradient(#d4d4d4, #fcfcfc);
}

.collapse {
    height: 17px;
    gap: 2px;
    justify-content: flex-end;
}

/* Ribbon */
.ribbon {
    display: flex;
    height: 95px;
    margin: 0 4px 0 3px;
    background: linear-gradient(#e8e8e8, #a0a0a0);
    border-top: 1px solid #fff;
    border-bottom: 1px solid #fff;
}

.panel {
    background: #fdfdfd;
    border-right: 1px solid #b5b5b5;
}

.panel h2 {
    display: flex;
    align-items: center;
    justify-content: center;
    gap: 7px;
    height: 18px;
    margin: 0 1px;
    border-top: 1px solid #dcdcdc;
    border-bottom: 1px solid #c2c2c2;
    background: #efefef;
    font-size: 12px;
    font-weight: normal;
    color: #333;
}

.tools {
    display: grid;
    height: 75px;
}

.select { grid-template-columns: 58px; }
.build { grid-template-columns: 48px 36px 54px 82px 70px 42px 48px 44px 52px 38px 52px; }
.circulation { grid-template-columns: 64px 30px 52px; }
.model { grid-template-columns: 46px 34px 57px; }
.room { grid-template-columns: 44px 50px 60px 38px 62px 45px; }
.opening { grid-template-columns: 42px 32px 46px 40px 49px; }
.datum { grid-template-columns: 44px 38px; }
.plane { grid-template-columns: 42px 36px 40px 42px; }

.tool {
    position: relative;
    flex-direction: column;
    justify-content: flex-start;
    padding-top: 6px;
    line-height: 15px;
    color: #b0b0b0;
    white-space: nowrap;
}

.tool > svg {
    width: 32px;
    height: 32px;
    margin-bottom: 3px;
    fill: #f3f4f5;
    stroke: #c3c6c9;
}

.tool .blue {
    fill: #e3effa;
    stroke: #b4d3ee;
}

.tool .yellow {
    fill: #fdf3cf;
    stroke: #c9c3b0;
}

.tool .none {
    fill: none;
}

.tool .red {
    fill: none;
    stroke: #efb7b4;
}

.tool .caret {
    margin-top: 3px;
    background-color: #777;
}

.tool .side {
    position: absolute;
    right: 0;
    top: 54px;
    margin-top: 0;
}

.options-bar {
    height: 28px;
    margin: 0 4px 0 3px;
    background: #e0e2e3;
}

/* Workspace */
.workspace {
    flex: 1;
    min-height: 0;
    display: grid;
    grid-template-columns: 324px 1fr;
    gap: 5px;
    margin: 0 4px 0 3px;
    background: #f0f0f0;
}

.palettes {
    display: flex;
    flex-direction: column;
    min-height: 0;
}

.palette-head {
    display: flex;
    align-items: center;
    justify-content: space-between;
    height: 18px;
    margin-bottom: 3px;
    padding: 0 5px 0 4px;
    background: #bfcddb;
    color: #44525f;
}

.properties {
    margin: 0 2px 4px 1px;
    border-top: 1px solid #666;
    border-left: 1px solid #666;
    border-bottom: 1px solid #ddd;
}

.type-selector {
    display: flex;
    align-items: center;
    gap: 5px;
    height: 72px;
    padding: 0 2px;
    border-bottom: 1px solid #ccc;
    background: linear-gradient(#fff, #e9e9e9);
    color: #444;
}

.type-selector button {
    margin-left: auto;
}

.thumb {
    display: grid;
    place-items: center;
    width: 66px;
    height: 66px;
    border: 1px solid #ccc;
    background: #f6f6f6;
}

.type-row {
    display: grid;
    grid-template-columns: 236px 1fr;
    align-items: center;
    height: 24px;
}

.combo {
    display: flex;
    align-items: center;
    height: 22px;
    padding: 0 4px 0 3px;
    border: 1px solid #777;
    border-radius: 2px;
    background: linear-gradient(#f2f2f2 0, #ebebeb 50%, #dcdcdc 50%, #cfcfcf 100%);
}

.combo select,
.status-combo select {
    flex: 1;
    min-width: 0;
    appearance: none;
    opacity: 1;
}

.edit-type {
    gap: 5px;
}

/* Scroll panes */
.scroll-pane {
    display: grid;
    grid-template-columns: 1fr 16px;
    grid-template-rows: 100%;
    overflow: hidden;
}

.props-pane {
    height: 262px;
}

.vbar {
    display: flex;
    flex-direction: column;
    align-items: center;
    min-height: 0;
    padding: 7px 0 6px;
    background: #eee;
    border-left: 1px solid #e2e2e2;
}

.vthumb {
    display: grid;
    place-items: center;
    width: 14px;
    margin: 7px 0 auto;
    border: 1px solid #999;
    border-radius: 2px;
    background: linear-gradient(90deg, #f5f5f5 0, #e9e9eb 50%, #c9c9cd 100%);
}

.vthumb::after {
    content: "";
    width: 7px;
    height: 7px;
    background: repeating-linear-gradient(#666 0 1px, transparent 1px 3px);
}

.props-thumb {
    height: 116px;
}

.tree-thumb {
    height: 178px;
}

/* Properties table */
.props {
    width: 303px;
    table-layout: fixed;
    border-collapse: separate;
    border-spacing: 0;
    background: #fff;
    color: #777;
}

.name-col {
    width: 152px;
}

.props th,
.props td {
    height: 18px;
    padding: 0 0 0 8px;
    border-bottom: 1px dotted #777;
    border-right: 1px dotted #777;
    font-weight: normal;
    line-height: 17px;
    text-align: left;
    white-space: nowrap;
}

.props td {
    padding: 0 0 0 2px;
}

.props .flush {
    padding: 0 1px;
}

.props .on {
    color: #000;
}

.props .group th {
    padding: 0 5px 0 2px;
    border: none;
    line-height: 18px;
    background: #dcdcdc;
    color: #000;
}

.group span {
    display: inline-block;
    width: 288px;
}

.group svg {
    display: inline-block;
}

.props input {
    display: block;
    appearance: none;
    width: 13px;
    height: 13px;
    margin-left: 1px;
    border: 1px solid #b5b5b5;
    background: #f4f4f4;
}

.edit {
    width: 100%;
    height: 16px;
    line-height: 14px;
    border: 1px solid #707070;
    border-bottom-width: 2px;
    border-radius: 2px;
    background: linear-gradient(#f4f4f4, #dadada);
}

.props-foot {
    display: flex;
    align-items: center;
    justify-content: space-between;
    height: 27px;
    padding: 0 2px;
}

.props-foot a {
    color: #0a63b0;
}

.props-foot button {
    width: 73px;
    height: 21px;
    border: 1px solid #adb2b5;
    border-radius: 2px;
    background: #f4f4f4;
    color: #838383;
}

/* Project browser */
.browser {
    flex: 1;
    min-height: 0;
    display: flex;
    flex-direction: column;
    margin: 0 2px 1px 1px;
    border-top: 1px solid #666;
    border-left: 1px solid #666;
}

.tree-pane {
    flex: 1;
    min-height: 0;
    background: #fff;
}

.tree {
    list-style: none;
    overflow: hidden;
    min-height: 0;
}

.tree li {
    display: flex;
    align-items: center;
    height: 18px;
    white-space: nowrap;
}

.tree .root {
    gap: 7px;
    padding-left: 4px;
    background:
        repeating-linear-gradient(#999 0 1px, transparent 1px 2px) 8px 0 / 1px 100% no-repeat,
        repeating-linear-gradient(90deg, #999 0 1px, transparent 1px 2px) 8px 10px / 12px 1px no-repeat;
}

.tree .first {
    background-position: 8px 10px;
}

.tree .leaf {
    gap: 10px;
    padding-left: 24px;
    background:
        repeating-linear-gradient(#999 0 1px, transparent 1px 2px) 8px 0 / 1px 100% no-repeat,
        repeating-linear-gradient(#999 0 1px, transparent 1px 2px) 28px 0 / 1px 100% no-repeat,
        repeating-linear-gradient(90deg, #999 0 1px, transparent 1px 2px) 28px 10px / 15px 1px no-repeat;
}

.tree .last {
    padding-left: 43px;
    background-size: 1px 100%, 1px 10px, 15px 1px;
}

.leaf span {
    padding: 0 3px;
}

.box {
    width: 9px;
    height: 9px;
    margin-top: 2px;
}

.kind {
    width: 16px;
    height: 16px;
}

.current span {
    background: #e0e0e0;
    font-weight: bold;
}

.hbar {
    display: flex;
    align-items: center;
    height: 17px;
    padding: 0 22px 0 6px;
    background: #eee;
}

.hthumb {
    display: grid;
    place-items: center;
    width: 245px;
    height: 15px;
    margin: 0 auto 0 8px;
    border: 1px solid #999;
    border-radius: 2px;
    background: linear-gradient(#f5f5f5 0, #e5e5e7 50%, #cacace 100%);
}

.hthumb::after {
    content: "";
    width: 7px;
    height: 7px;
    background: repeating-linear-gradient(90deg, #666 0 1px, transparent 1px 3px);
}

/* Drawing area */
.view {
    display: grid;
    grid-template-columns: 1fr 17px;
    grid-template-rows: 1fr 18px;
    min-height: 0;
    border-top: 1px solid #666;
    border-left: 1px solid #666;
}

.canvas {
    background: #fff;
}

.view-vbar {
    justify-content: space-between;
    border-right: 1px solid #f6f6f6;
}

.knob {
    width: 15px;
    height: 15px;
    border: 1px solid #999;
    border-radius: 1px;
    background: linear-gradient(#f5f5f5 50%, #d2d2d4 50%);
}

.view-controls {
    display: flex;
    align-items: center;
    gap: 7px;
    padding: 0 7px 0 1px;
    background: #ebebeb;
}

.view-controls .left {
    margin-left: 6px;
}

.track {
    flex: 1;
    display: flex;
    justify-content: center;
}

.corner {
    display: grid;
    place-items: end;
    background: #f0f0f0;
}

/* Status bar */
.status {
    display: flex;
    align-items: center;
    height: 24px;
    margin: 1px 4px 3px 3px;
    padding: 1px 2px 0;
    gap: 2px;
    border-top: 1px solid #8a8a8a;
    background: linear-gradient(#e2e2e2, #c6c6c6);
}

.ready {
    width: 926px;
}

.sb {
    width: 24px;
    height: 22px;
    background: #d9d9d9;
    border: 1px solid #cfcfcf;
}

.sb svg {
    width: 17px;
    height: 17px;
}

.count {
    width: 52px;
    gap: 4px;
    margin-left: 2px;
    padding-left: 3px;
    justify-content: flex-start;
}

.status-combo {
    display: flex;
    align-items: center;
    height: 20px;
    padding: 0 4px;
    background: #fff;
    color: #888;
}

.status-combo .caret {
    background: #999;
}

.workset {
    width: 204px;
}

.option {
    width: 155px;
    margin-left: 2px;
}

.select-tools {
    display: flex;
    gap: 2px;
    margin-left: auto;
}

.filter {
    justify-content: flex-start;
    width: 38px;
}

.status .grip {
    margin: 6px 0 0 59px;
}

/* Error dialog */
.dialog {
    position: absolute;
    left: 718px;
    top: 431px;
    width: 462px;
    padding: 0 7px 7px;
    border: 1px solid #1c2a38;
    border-radius: 6px 6px 1px 1px;
    background: linear-gradient(#9db8d5 0, #b9d0e9 30px, #d7e4f4 118px, #b9d0e9 119px);
    box-shadow: inset 0 0 0 1px #cfe6f3;
}

.dialog-head {
    display: flex;
    align-items: center;
    justify-content: space-between;
    height: 29px;
    padding: 6px 1px 0 4px;
}

.dialog-head button {
    width: 32px;
    height: 17px;
    border: 1px solid #571c1c;
    border-radius: 2px;
    background: linear-gradient(#dc9c94 0, #cf7465 50%, #b5412b 50%, #cf6f55 100%);
}

.dialog-body {
    display: flex;
    gap: 8px;
    height: 84px;
    padding: 27px 25px 0;
    background: #fff;
    line-height: 15px;
    white-space: nowrap;
    color: #000;
}

.dialog-foot {
    display: flex;
    justify-content: flex-end;
    height: 49px;
    padding: 13px 7px 0;
    background: #f0f0f0;
}

.dialog-foot button {
    width: 86px;
    height: 24px;
    border: 1px solid #2c7fa5;
    border-radius: 3px;
    background: linear-gradient(#eaf5fa 0, #dcedf6 50%, #c3dfec 50%, #bbd9e8 100%);
    box-shadow: inset 0 0 0 1px #4cc7ee;
}

/* Taskbar */
.taskbar {
    display: flex;
    height: 40px;
    border-top: 1px solid #3c5063;
    background: linear-gradient(90deg, #8093ab 0, #8799b2 55px, #a6bedb 110px, #a6bfdc 1565px, #8495ad 1605px, #8093ab 100%);
    box-shadow: inset 0 1px #c4d5e8;
}

.start {
    width: 54px;
    margin-right: 5px;
}

.task {
    width: 60px;
    margin-right: 2px;
}

.task.open {
    border: 1px solid #3e4f63;
    border-radius: 3px;
    background: linear-gradient(135deg, #e9eff7, #b9cbe1);
    box-shadow: inset 0 0 0 1px #f2f6fb;
}

.tray {
    display: flex;
    align-items: center;
    gap: 6px;
    margin-left: auto;
    color: #fff;
}

.tray svg {
    width: 18px;
    height: 18px;
}

.lang {
    margin: 0 16px 6px 0;
}

.clock {
    display: flex;
    flex-direction: column;
    align-items: center;
    width: 58px;
    margin-left: 7px;
    line-height: 17px;
}

.show-desktop {
    align-self: stretch;
    width: 15px;
    border: 1px solid #4d5b6e;
    background: linear-gradient(#8d9db3, #66758b 50%, #8a9ab0);
}
```
